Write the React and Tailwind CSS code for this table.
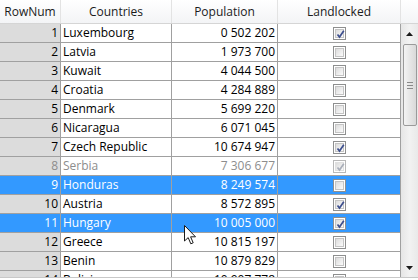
import React from 'react';

const ROWS = [
  { n: 1, country: 'Luxembourg', pop: '0 502 202', land: true },
  { n: 2, country: 'Latvia', pop: '1 973 700', land: false },
  { n: 3, country: 'Kuwait', pop: '4 044 500', land: false },
  { n: 4, country: 'Croatia', pop: '4 284 889', land: false },
  { n: 5, country: 'Denmark', pop: '5 699 220', land: false },
  { n: 6, country: 'Nicaragua', pop: '6 071 045', land: false },
  { n: 7, country: 'Czech Republic', pop: '10 674 947', land: true },
  { n: 8, country: 'Serbia', pop: '7 306 677', land: true, disabled: true },
  { n: 9, country: 'Honduras', pop: '8 249 574', land: false, selected: true },
  { n: 10, country: 'Austria', pop: '8 572 895', land: true },
  { n: 11, country: 'Hungary', pop: '10 005 000', land: true, selected: true },
  { n: 12, country: 'Greece', pop: '10 815 197', land: false },
  { n: 13, country: 'Benin', pop: '10 879 829', land: false },
  { n: 14, country: 'Bolivia', pop: '10 907 778', land: true },
];

function CheckBox({ checked, disabled }) {
  return (
    <div className={`w-[13px] h-[13px] border ${disabled ? 'border-[#b8b8b8]' : 'border-[#8e8f8f]'} bg-white p-px`}>
      <div className={`w-full h-full border ${disabled ? 'border-[#e0e0e0]' : 'border-[#c4c4c4]'} bg-gradient-to-br from-[#dcdcdc] to-[#fbfbfb] relative`}>
        {checked && (
          <svg width="11" height="11" viewBox="0 0 11 11" className="absolute -left-px -top-px">
            <path
              d="M2.5 5.5 L4.5 8 L8.8 1.8"
              fill="none"
              stroke={disabled ? '#a9aeb9' : '#3d4f8e'}
              strokeWidth="1.7"
            />
          </svg>
        )}
      </div>
    </div>
  );
}

function Row({ r }) {
  const sel = r.selected;
  const text = sel ? 'text-white' : r.disabled ? 'text-[#8d8d8d]' : 'text-black';
  const bg = sel ? 'bg-[#3399ff]' : 'bg-white';
  return (
    <div className={`flex h-[19px] shrink-0 border-b border-[#a0a0a0] ${text}`}>
      <div className={`w-[61px] shrink-0 border-r border-[#a0a0a0] ${sel ? 'bg-[#3399ff]' : 'bg-[#dcdcdc]'} flex items-center justify-end pr-[2px]`}>
        {r.n}
      </div>
      <div className={`w-[111px] shrink-0 border-r border-[#a0a0a0] ${bg} flex items-center pl-[2px] whitespace-nowrap`}>
        {r.country}
      </div>
      <div className={`w-[106px] shrink-0 border-r border-[#a0a0a0] ${bg} flex items-center justify-end pr-[2px]`}>
        {r.pop}
      </div>
      <div className={`w-[122px] shrink-0 ${bg} flex items-center justify-center`}>
        <CheckBox checked={r.land} disabled={r.disabled} />
      </div>
    </div>
  );
}

function ScrollBar() {
  return (
    <div className="w-[17px] shrink-0 bg-gradient-to-r from-[#e6e6e6] via-[#f2f2f2] to-[#e9e9e9] flex flex-col items-center">
      <div className="h-[20px] w-full flex items-center justify-center">
        <svg width="7" height="4" viewBox="0 0 7 4"><path d="M0 4 L3.5 0 L7 4 Z" fill="#1a1a1a" /></svg>
      </div>
      <div className="w-[14px] h-[82px] rounded-[2px] border border-[#9a9a9a] bg-gradient-to-r from-[#f3f3f3] to-[#d9d9d9] flex flex-col items-center justify-center gap-[2px]">
        <div className="w-[6px] h-px bg-[#8a8a8a]" />
        <div className="w-[6px] h-px bg-[#8a8a8a]" />
        <div className="w-[6px] h-px bg-[#8a8a8a]" />
      </div>
      <div className="flex-1" />
      <div className="h-[18px] w-full flex items-center justify-center">
        <svg width="7" height="4" viewBox="0 0 7 4"><path d="M0 0 L7 0 L3.5 4 Z" fill="#1a1a1a" /></svg>
      </div>
    </div>
  );
}

function Cursor() {
  return (
    <svg width="14" height="22" viewBox="0 0 14 22" className="absolute left-[184px] top-[225px]">
      <path
        d="M0.5 0.5 L0.5 16 L4.2 12.6 L6.8 18.8 L9.2 17.8 L6.6 11.8 L11.5 11.8 Z"
        fill="#ffffff"
        stroke="#1a1a1a"
        strokeWidth="1"
        strokeLinejoin="round"
      />
    </svg>
  );
}

export default function App() {
  return (
    <div className="relative w-[418px] h-[280px] bg-white overflow-hidden text-[12px] font-['Segoe_UI','Open_Sans','Noto_Sans',sans-serif]">
      <div className="flex h-[24px] border-b border-[#d5d5d5] bg-gradient-to-b from-white to-[#f3f4f6] text-[#1b1b1b]">
        <div className="w-[61px] shrink-0 border-r border-[#e3e3e3] flex items-center justify-center">RowNum</div>
        <div className="w-[111px] shrink-0 border-r border-[#e3e3e3] flex items-center justify-center">Countries</div>
        <div className="w-[106px] shrink-0 border-r border-[#e3e3e3] flex items-center justify-center">Population</div>
        <div className="w-[123px] shrink-0 border-r border-[#e3e3e3] flex items-center justify-center">Landlocked</div>
        <div className="flex-1" />
      </div>
      <div className="flex h-[254px] border-b border-[#c8c8c8]">
        <div className="w-[401px] shrink-0 flex flex-col overflow-hidden border-r border-[#a0a0a0]">
          {ROWS.map(r => <Row key={r.n} r={r} />)}
        </div>
        <ScrollBar />
      </div>
      <Cursor />
    </div>
  );
}
